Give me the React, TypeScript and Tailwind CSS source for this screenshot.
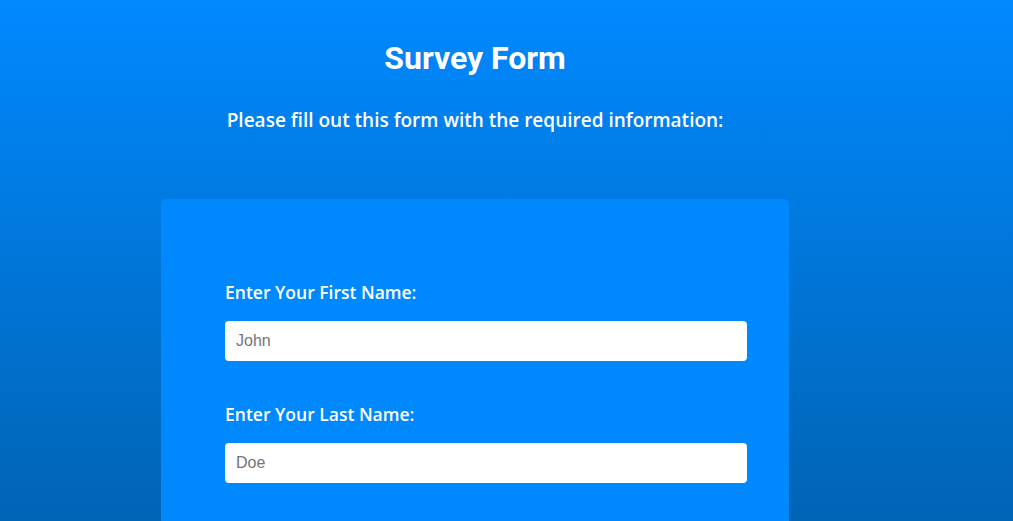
import React from 'react';

const fields = [
  { id: 'first', label: 'Enter Your First Name:', placeholder: 'John' },
  { id: 'last', label: 'Enter Your Last Name:', placeholder: 'Doe' },
];

const App: React.FC = () => {
  return (
    <div className="h-screen overflow-hidden bg-gradient-to-b from-[#0189ff] to-[#0064b5] text-white">
      <div className="ml-[161px] w-[628px] flex flex-col items-center">
        <h1 className="mt-[40px] text-[32px] leading-[37px] font-bold font-['Roboto',Arial,sans-serif]">
          Survey Form
        </h1>
        <p className="mt-[30px] text-[19px] leading-[27px] font-semibold font-['Open_Sans',sans-serif]">
          Please fill out this form with the required information:
        </p>

        <form className="mt-[65px] w-full bg-[#0088ff] rounded-[5px] pt-[81px] pl-[64px] pb-24">
          {fields.map(f => (
            <div key={f.id} className="mb-[41px]">
              <label
                htmlFor={f.id}
                className="block text-[17.5px] leading-[24px] font-semibold font-['Open_Sans',sans-serif]"
              >
                {f.label}
              </label>
              <input
                id={f.id}
                type="text"
                placeholder={f.placeholder}
                className="mt-[17px] block w-[522px] h-[40px] px-[11px] bg-white rounded-[4px] text-[16px] text-gray-800 placeholder:text-[#757575] outline-none font-['Liberation_Sans',Arial,sans-serif]"
              />
            </div>
          ))}
        </form>
      </div>
    </div>
  );
};

export default App;
